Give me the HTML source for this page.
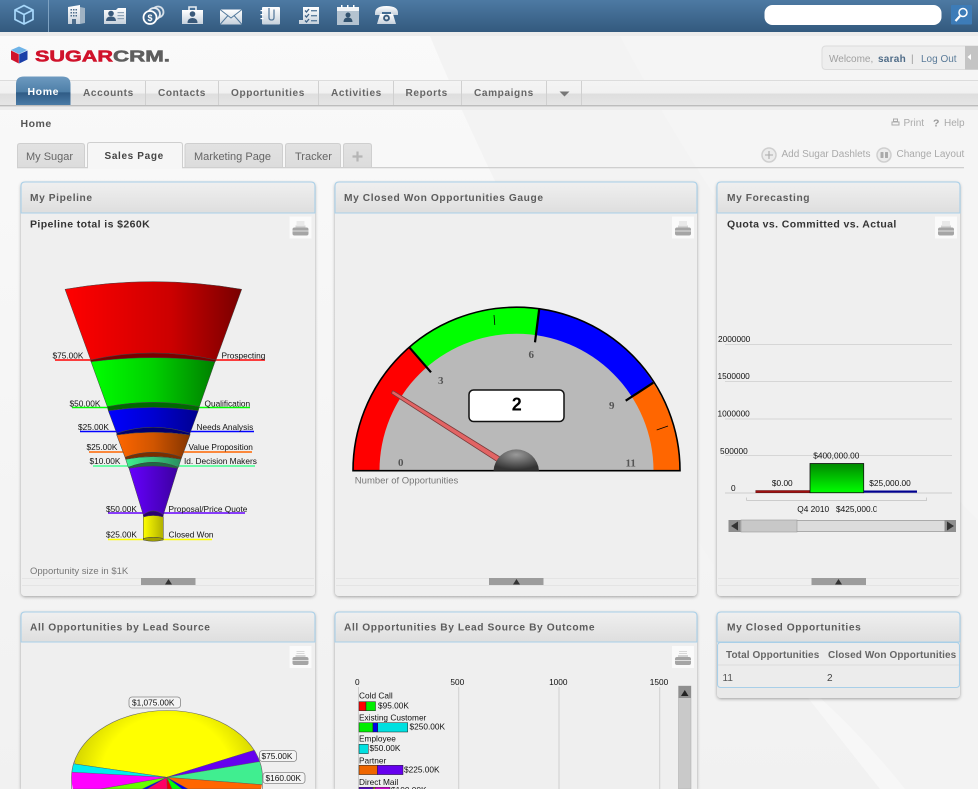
<!DOCTYPE html>
<html><head><meta charset="utf-8"><title>SugarCRM</title>
<style>
html,body{margin:0;padding:0;background:#f3f3f3;width:978px;height:789px;overflow:hidden}
svg{display:block;position:absolute;left:0;top:0}
text{font-family:"Liberation Sans",sans-serif}
.h{font-size:10.2px;font-weight:bold;fill:#5c5c5c;letter-spacing:.6px}
.n{font-size:10.1px;font-weight:bold;fill:#666;letter-spacing:.6px}
.c{font-size:8.3px;fill:#111}
.g{font-size:10px;fill:#aaa}
.t{font-size:11px;fill:#666}
.s{font-size:10.5px;font-weight:bold;fill:#333;letter-spacing:.4px}
.l{font-size:11px;font-weight:bold;fill:#555;font-family:"Liberation Serif",serif}
</style></head><body>
<svg width="978" height="789" viewBox="0 0 978 789" xmlns="http://www.w3.org/2000/svg">
<defs>
<linearGradient id="top" x1="0" y1="0" x2="0" y2="1"><stop offset="0" stop-color="#4d7aa3"/><stop offset="1" stop-color="#335a7e"/></linearGradient>
<linearGradient id="ic" x1="0" y1="0" x2="0" y2="1"><stop offset="0" stop-color="#fff"/><stop offset="1" stop-color="#c6d1dc"/></linearGradient>
<linearGradient id="bg" x1="0" y1="0" x2="0" y2="1"><stop offset="0" stop-color="#fafafa"/><stop offset="1" stop-color="#f1f1f1"/></linearGradient>
<linearGradient id="nav" x1="0" y1="0" x2="0" y2="1"><stop offset="0" stop-color="#f4f4f4"/><stop offset=".52" stop-color="#f1f1f1"/><stop offset=".53" stop-color="#dedede"/><stop offset="1" stop-color="#e6e6e6"/></linearGradient>
<linearGradient id="home" x1="0" y1="0" x2="0" y2="1"><stop offset="0" stop-color="#6d9ac0"/><stop offset=".55" stop-color="#4e7fa8"/><stop offset=".56" stop-color="#2f5b85"/><stop offset="1" stop-color="#4a7ba6"/></linearGradient>
<linearGradient id="hd" x1="0" y1="0" x2="0" y2="1"><stop offset="0" stop-color="#f0f0f0"/><stop offset="1" stop-color="#dedede"/></linearGradient>
<linearGradient id="tab" x1="0" y1="0" x2="0" y2="1"><stop offset="0" stop-color="#e2e2e2"/><stop offset="1" stop-color="#dcdcdc"/></linearGradient>
<linearGradient id="red" x1="0" y1="0" x2="1" y2="0"><stop offset="0" stop-color="#ff0000"/><stop offset=".6" stop-color="#cc0000"/><stop offset="1" stop-color="#780000"/></linearGradient>
<linearGradient id="grn" x1="0" y1="0" x2="1" y2="0"><stop offset="0" stop-color="#00ff00"/><stop offset=".5" stop-color="#00d000"/><stop offset="1" stop-color="#008000"/></linearGradient>
<linearGradient id="blu" x1="0" y1="0" x2="1" y2="0"><stop offset="0" stop-color="#0000ff"/><stop offset=".5" stop-color="#0000d0"/><stop offset="1" stop-color="#000090"/></linearGradient>
<linearGradient id="org" x1="0" y1="0" x2="1" y2="0"><stop offset="0" stop-color="#ff6600"/><stop offset=".5" stop-color="#d05500"/><stop offset="1" stop-color="#853500"/></linearGradient>
<linearGradient id="aq" x1="0" y1="0" x2="1" y2="0"><stop offset="0" stop-color="#40f090"/><stop offset="1" stop-color="#2a9060"/></linearGradient>
<linearGradient id="pur" x1="0" y1="0" x2="1" y2="0"><stop offset="0" stop-color="#6600ff"/><stop offset="1" stop-color="#3c00a0"/></linearGradient>
<linearGradient id="yel" x1="0" y1="0" x2="1" y2="0"><stop offset="0" stop-color="#ffff00"/><stop offset="1" stop-color="#b0b000"/></linearGradient>
<linearGradient id="bar" x1="0" y1="0" x2="0" y2="1"><stop offset="0" stop-color="#008800"/><stop offset="1" stop-color="#00ff00"/></linearGradient>
<radialGradient id="knob" cx=".5" cy=".25" r=".7"><stop offset="0" stop-color="#9a9a9a"/><stop offset="1" stop-color="#333"/></radialGradient>
<radialGradient id="pie" gradientUnits="userSpaceOnUse" cx="167" cy="777" r="96" gradientTransform="translate(0 54) scale(1 .93)"><stop offset=".68" stop-color="#ffff00"/><stop offset="1" stop-color="#d2d200"/></radialGradient>
<filter id="sh" x="-5%" y="-5%" width="110%" height="110%"><feDropShadow dx="0" dy="1" stdDeviation="1.500" flood-color="#000" flood-opacity=".35"/></filter>
<clipPath id="clipPie"><path d="M60 700H280V789H60Z"/></clipPath>
<clipPath id="clipE"><ellipse cx="167" cy="777.500" rx="95.500" ry="67"/></clipPath>
<clipPath id="clipQ"><rect x="790" y="500" width="86.500" height="16"/></clipPath>
<clipPath id="clipB"><rect x="340" y="660" width="350" height="129"/></clipPath>
<symbol id="pr" viewBox="0 0 22 22"><rect width="22" height="22" fill="#fafafa"/><rect x="7" y="5" width="8" height="1" fill="#d8d8d8"/><rect x="7" y="7" width="8" height="1" fill="#d8d8d8"/><rect x="6" y="9" width="10" height="2" fill="#d4d4d4"/><path d="M3 13q0-2 2-2h12q2 0 2 2v4q0 2-2 2H5q-2 0-2-2z" fill="#a5a5a5"/><rect x="3" y="14" width="16" height="1" fill="#dedede"/></symbol>
</defs>

<!-- page background -->
<rect width="978" height="789" fill="url(#bg)"/>
<path d="M430 36H978V789H880L782 665Q560 350 430 36Z" fill="#f3f3f3"/>
<path d="M782 665L880 789H905Q850 720 782 665Z" fill="#f7f7f7"/>
<path d="M620 36H978V520Q760 300 620 36Z" fill="#f5f5f5"/>

<!-- top bar -->
<rect width="978" height="32" fill="url(#top)"/>
<rect y="32" width="978" height="4" fill="#dcdcdc" opacity=".45"/>
<rect x="48" width="1" height="32" fill="#7ea2c2"/>
<g fill="none" stroke="#a8d8fb" stroke-width="1.700" stroke-linejoin="round"><path d="M24 5.500L33 10V19.500L24 24L15 19.500V10Z"/><path d="M15 10L24 14.500L33 10M24 14.500V24"/></g>
<!-- building -->
<g><path d="M68 7L80 5V24H68Z" fill="url(#ic)"/><path d="M80 7L85 8V23L80 24Z" fill="#9fb2c3"/><g fill="#4d6d8c"><rect x="70.500" y="9" width="1.500" height="1.500"/><rect x="73" y="9" width="1.500" height="1.500"/><rect x="75.500" y="9" width="1.500" height="1.500"/><rect x="70.500" y="12" width="1.500" height="1.500"/><rect x="73" y="12" width="1.500" height="1.500"/><rect x="75.500" y="12" width="1.500" height="1.500"/><rect x="70.500" y="15" width="1.500" height="1.500"/><rect x="73" y="15" width="1.500" height="1.500"/><rect x="75.500" y="15" width="1.500" height="1.500"/><rect x="72" y="19" width="4" height="5"/></g></g>
<!-- card -->
<g><path d="M104 10H116L118 8H126V24H104Z" fill="url(#ic)"/><circle cx="111" cy="13.500" r="2.800" fill="#39597a"/><path d="M106 21q0-4.500 5-4.500t5 4.500z" fill="#39597a"/><rect x="117.500" y="12" width="6.500" height="1.200" fill="#8fa4b7"/><rect x="117.500" y="15" width="6.500" height="1.200" fill="#8fa4b7"/><rect x="117.500" y="18" width="6.500" height="1.200" fill="#8fa4b7"/></g>
<!-- coins -->
<g fill="none"><circle cx="158" cy="12" r="5.500" stroke="#d5dfe8" stroke-width="1.800"/><circle cx="154" cy="14" r="6" stroke="#e3e9ef" stroke-width="1.800" fill="#476f96"/><circle cx="150" cy="17.500" r="6.500" stroke="#fff" stroke-width="1.800" fill="#3d6489"/></g><text x="147.500" y="21" font-size="9" font-weight="bold" fill="#fff">$</text>
<!-- briefcase -->
<g><path d="M189 10V7H196V10" fill="none" stroke="#e8edf2" stroke-width="1.600"/><rect x="182" y="10" width="21" height="14" fill="url(#ic)"/><circle cx="192.500" cy="14" r="2.800" fill="#39597a"/><path d="M187.500 23q0-5 5-5t5 5z" fill="#39597a"/></g>
<!-- mail -->
<g><rect x="220" y="9.500" width="22" height="15" fill="url(#ic)"/><path d="M220 9.500L231 18L242 9.500M220 24.500L228 15.500M242 24.500L234 15.500" fill="none" stroke="#52799c" stroke-width="1"/></g>
<!-- notebook -->
<g><rect x="262" y="7" width="18" height="17.500" rx="1" fill="url(#ic)"/><g fill="#fff"><rect x="260.500" y="10" width="3" height="1.200"/><rect x="260.500" y="14" width="3" height="1.200"/><rect x="260.500" y="18" width="3" height="1.200"/></g><path d="M269 8V17.500Q269 20 271.500 20T274 17.500V9.500" fill="none" stroke="#5a7d9e" stroke-width="1.300"/></g>
<!-- checklist -->
<g><path d="M303 7H319V24H299V20H303Z" fill="url(#ic)"/><g fill="none" stroke="#3e6286" stroke-width="1.300"><path d="M305 10.500L306.500 12L309 9M305 15.500L306.500 17L309 14M305 20.500L306.500 22L309 19"/></g><g fill="#5c7f9f"><rect x="311" y="10" width="6" height="1.400"/><rect x="311" y="15" width="6" height="1.400"/><rect x="311" y="20" width="6" height="1.400"/></g></g>
<!-- calendar -->
<g><rect x="337" y="7" width="22" height="18" fill="#b4c3d0"/><rect x="337" y="7" width="22" height="4" fill="#f0f3f6"/><g fill="#fff"><rect x="341" y="5" width="1.500" height="3"/><rect x="347" y="5" width="1.500" height="3"/><rect x="353" y="5" width="1.500" height="3"/></g><circle cx="348" cy="15" r="2.500" fill="#33536f"/><path d="M343.500 22q0-4.500 4.500-4.500t4.500 4.500z" fill="#33536f"/></g>
<!-- phone -->
<g><path d="M375 13Q375 6 386.500 6T398 13V15H391V12H382V15H375Z" fill="url(#ic)"/><path d="M380 14H393L396 24H377Z" fill="url(#ic)"/><circle cx="386.500" cy="18" r="3.400" fill="#36597b"/><circle cx="386.500" cy="18" r="1.500" fill="#dfe6ec"/></g>
<!-- search -->
<rect x="764.500" y="5" width="177" height="20" rx="8" fill="#fff"/>
<rect x="951" y="5" width="21" height="19.500" rx="1" fill="#3d7cb8"/>
<g fill="none" stroke="#fff"><circle cx="963" cy="12.500" r="4" stroke-width="1.500"/><path d="M960 16L955.500 21" stroke-width="2.200"/></g>

<!-- logo -->
<path d="M19 46.500L27 50L19 54L11 50Z" fill="#6fb4e8"/><path d="M11 50.500L18.800 54.300V63.500L11 59.500Z" fill="#d0122b"/><path d="M19.200 54.300L27.500 50.500V59.500L19.200 63.500Z" fill="#1a3fa8"/>
<text x="35" y="61.500" font-size="16" font-weight="bold" fill="#d0122b" stroke="#d0122b" stroke-width=".6" textLength="78" lengthAdjust="spacingAndGlyphs">SUGAR</text>
<text x="113" y="61.500" font-size="16" font-weight="bold" fill="#5e5e5e" stroke="#5e5e5e" stroke-width=".6" textLength="57" lengthAdjust="spacingAndGlyphs">CRM.</text>

<!-- welcome -->
<path d="M826 46H978V69.500H826Q822 69.500 822 65.500V50Q822 46 826 46Z" fill="#eeeeee" stroke="#dcdcdc"/>
<rect x="965" y="46" width="13" height="23.500" fill="#c4c4c4"/><path d="M971 54V60L967.500 57Z" fill="#fff"/>
<text x="829" y="62" font-size="10" fill="#a0a0a0">Welcome,</text><text x="878" y="62" font-size="10" font-weight="bold" fill="#4f6c88" letter-spacing=".25">sarah</text><text x="911" y="62" font-size="10" fill="#9a9a9a">|</text><text x="921" y="62" font-size="10" fill="#5a7b99">Log Out</text>

<!-- nav -->
<rect y="80" width="978" height="26" fill="url(#nav)"/>
<rect y="80" width="978" height="1" fill="#dcdcdc"/><rect y="105" width="978" height="1.500" fill="#bdbdbd"/>
<rect y="107" width="978" height="3" fill="#e8e8e8" opacity=".7"/>
<g fill="#d0d0d0"><rect x="145" y="81" width="1" height="24"/><rect x="218" y="81" width="1" height="24"/><rect x="318" y="81" width="1" height="24"/><rect x="393" y="81" width="1" height="24"/><rect x="461" y="81" width="1" height="24"/><rect x="546" y="81" width="1" height="24"/><rect x="581" y="81" width="1" height="24"/></g>
<path d="M16 105V84Q16 76.500 24 76.500H62Q70.500 76.500 70.500 84V105Z" fill="url(#home)"/>
<text x="27.500" y="95" font-size="10.500" font-weight="bold" fill="#fff" letter-spacing=".6">Home</text>
<text class="n" x="83" y="96">Accounts</text><text class="n" x="158" y="96">Contacts</text><text class="n" x="231" y="96">Opportunities</text><text class="n" x="331" y="96">Activities</text><text class="n" x="405.500" y="96">Reports</text><text class="n" x="474" y="96">Campaigns</text>
<path d="M559.500 91.500H569.500L564.500 96.500Z" fill="#777"/>

<!-- page head -->
<text x="20.500" y="127" font-size="10.500" font-weight="bold" fill="#555" letter-spacing=".5">Home</text>
<path d="M892 122h7v3h-7z M893.500 119h4v2.500h-4z" fill="none" stroke="#aaa"/><text class="g" x="903.500" y="126">Print</text>
<text x="933" y="126.500" font-size="10.500" font-weight="bold" fill="#999">?</text><text class="g" x="944" y="126">Help</text>
<circle cx="769" cy="155" r="7" fill="#ececec" stroke="#cfcfcf" stroke-width="1.500"/><path d="M769 151v8M765 155h8" stroke="#aaa" stroke-width="1.100"/>
<text class="g" x="781.500" y="157">Add Sugar Dashlets</text>
<circle cx="884" cy="155" r="7" fill="#ececec" stroke="#cfcfcf" stroke-width="1.500"/><rect x="880.500" y="152" width="3" height="6" rx=".5" fill="#aaa"/><rect x="885" y="152" width="3" height="6" rx=".5" fill="#aaa"/>
<text class="g" x="896.500" y="157">Change Layout</text>

<!-- tabs -->
<rect x="17" y="167" width="947" height="1.300" fill="#cfcfcf"/>
<g stroke="#cfcfcf" fill="url(#tab)"><path d="M17.500 167.500V146Q17.500 143.500 20 143.500H82Q84.500 143.500 84.500 146V167.500Z"/><path d="M185 167.500V146Q185 143.500 187.500 143.500H280Q282.500 143.500 282.500 146V167.500Z"/><path d="M285.500 167.500V146Q285.500 143.500 288 143.500H338Q340.500 143.500 340.500 146V167.500Z"/><path d="M343.500 167.500V146Q343.500 143.500 346 143.500H369Q371.500 143.500 371.500 146V167.500Z"/></g>
<path d="M87.500 167.500V145Q87.500 142.500 90 142.500H180Q182.500 142.500 182.500 145V167.500" fill="#f6f6f6" stroke="#cfcfcf"/><rect x="88" y="166" width="94" height="3" fill="#f6f6f6"/>
<text class="t" x="26" y="160">My Sugar</text>
<text x="104.500" y="159" font-size="10" font-weight="bold" fill="#444" letter-spacing=".65">Sales Page</text>
<text class="t" x="194" y="160">Marketing Page</text><text class="t" x="295" y="160">Tracker</text>
<path d="M357.500 151.500v10M352.500 156.500h10" stroke="#b5b5b5" stroke-width="2.200"/>

<!-- panels -->
<g filter="url(#sh)" fill="#efefef">
<rect x="21" y="182" width="294" height="414" rx="4"/>
<rect x="335" y="182" width="362" height="414" rx="4"/>
<rect x="717" y="182" width="243" height="414" rx="4"/>
<path d="M21 789V616Q21 612 25 612H311Q315 612 315 616V789Z"/>
<path d="M335 789V616Q335 612 339 612H693Q697 612 697 616V789Z"/>
<rect x="717" y="612" width="243" height="86" rx="4" fill="#e9e9e9"/>
</g>
<g fill="url(#hd)" stroke="#a8cfe8" stroke-width="1.100">
<path d="M21 213V186Q21 182 25 182H311Q315 182 315 186V213Z"/>
<path d="M335 213V186Q335 182 339 182H693Q697 182 697 186V213Z"/>
<path d="M717 213V186Q717 182 721 182H956Q960 182 960 186V213Z"/>
<path d="M21 642V616Q21 612 25 612H311Q315 612 315 616V642Z"/>
<path d="M335 642V616Q335 612 339 612H693Q697 612 697 616V642Z"/>
<path d="M717 642V616Q717 612 721 612H956Q960 612 960 616V642Z"/>
</g>
<text class="h" x="30" y="201">My Pipeline</text>
<text class="h" x="344" y="201">My Closed Won Opportunities Gauge</text>
<text class="h" x="727" y="201">My Forecasting</text>
<text class="h" x="30" y="630.500">All Opportunities by Lead Source</text>
<text class="h" x="344" y="630.500">All Opportunities By Lead Source By Outcome</text>
<text class="h" x="727" y="630.500">My Closed Opportunities</text>
<text class="s" x="30" y="227.500">Pipeline total is $260K</text>
<text class="s" x="727" y="227.500">Quota vs. Committed vs. Actual</text>
<use href="#pr" x="289.500" y="216.500" width="22" height="22"/><use href="#pr" x="672" y="216.500" width="22" height="22"/><use href="#pr" x="935" y="216.500" width="22" height="22"/><use href="#pr" x="289.500" y="646" width="22" height="22"/><use href="#pr" x="672" y="646" width="22" height="22"/>

<!-- panel footers -->
<g fill="#e4e4e4"><rect x="22" y="578" width="292" height="1"/><rect x="22" y="585" width="292" height="1"/><rect x="336" y="578" width="360" height="1"/><rect x="336" y="585" width="360" height="1"/><rect x="718" y="578" width="241" height="1"/><rect x="718" y="585" width="241" height="1"/></g>
<g fill="#9c9c9c"><rect x="141" y="578" width="54.500" height="7"/><rect x="489" y="578" width="54.500" height="7"/><rect x="811.500" y="578" width="54.500" height="7"/></g>
<g fill="#333"><path d="M165 584.500L168.500 579L172 584.500Z"/><path d="M513 584.500L516.500 579L520 584.500Z"/><path d="M835 584.500L838.500 579L842 584.500Z"/></g>

<!-- funnel leader lines -->
<g fill="none" stroke-width="1.400">
<path d="M55 360H265" stroke="#ff0000"/>
<path d="M72 407.500H250" stroke="#00ff00"/>
<path d="M80 431.500H254" stroke="#0000ff"/>
<path d="M89 452H252" stroke="#ff6600"/>
<path d="M93 466H255" stroke="#40ff90"/>
<path d="M108 513H245" stroke="#6600ff"/>
<path d="M108 539.500H212" stroke="#ffff00"/>
</g>
<!-- funnel -->
<g stroke="#444" stroke-width=".5">
<path d="M65 289.300Q153 274 241.700 289.300L216 360Q153 346 90.700 360Z" fill="url(#red)"/>
<path d="M90.700 360Q153 346 216 360L215 362Q153 354 91 362Z" fill="#7a0000"/>
<path d="M91 361.700Q153 353.700 215 361.700L199.300 406.700Q153 398 107.300 406.700Z" fill="url(#grn)"/>
<path d="M107.300 406.700Q153 398 199.300 406.700L198.300 410.700Q153 404 108.300 410.700Z" fill="#006a00"/>
<path d="M108.300 410.700Q153 404 198.300 410.700L190 433.300Q153 421.300 116.700 433.300Z" fill="url(#blu)"/>
<path d="M116.700 433.300Q153 421.300 190 433.300L190 435Q153 429.600 116.700 435Z" fill="#000070"/>
<path d="M116.700 435Q153 429.600 190 435L181.700 457.300Q153 447.300 125 457.300Z" fill="url(#org)"/>
<path d="M125 457.300Q153 447.300 181.700 457.300L181 459.300Q153 454 125.700 459.300Z" fill="#7a2f00"/>
<path d="M125.700 459.300Q153 454 181 459.300L178.300 467.300Q153 457.300 128.300 467.300Z" fill="url(#aq)"/>
<path d="M128.300 467.300Q153 457.300 178.300 467.300L177.700 468.300Q153 463.700 129 468.300Z" fill="#1e6a45"/>
<path d="M129 468.300Q153 463.700 177.700 468.300L163.300 515Q153 507 143.300 515Z" fill="url(#pur)"/>
<path d="M143.300 515Q153 507 163.300 515L163.300 516.500Q153 519 143.300 516.500Z" fill="#2a0070"/>
<path d="M143.300 517Q153 514 163.300 517V538.500Q153 536 143.300 538.500Z" fill="url(#yel)"/>
<path d="M143.300 538.500Q153 536 163.300 538.500V540Q153 542.500 143.300 540Z" fill="#a0a000"/>
</g>
<g>
<text class="c" x="52.500" y="358.500">$75.00K</text><text class="c" x="221.500" y="358.500">Prospecting</text>
<text class="c" x="69.500" y="406.500">$50.00K</text><text class="c" x="204.500" y="406.500">Qualification</text>
<text class="c" x="78" y="430">$25.00K</text><text class="c" x="196.500" y="430">Needs Analysis</text>
<text class="c" x="86.500" y="450">$25.00K</text><text class="c" x="188.500" y="450">Value Proposition</text>
<text class="c" x="89.500" y="464">$10.00K</text><text class="c" x="184" y="464">Id. Decision Makers</text>
<text class="c" x="106" y="512">$50.00K</text><text class="c" x="168.500" y="512">Proposal/Price Quote</text>
<text class="c" x="106" y="537.500">$25.00K</text><text class="c" x="168.500" y="537.500">Closed Won</text>
</g>
<text x="30" y="574" font-size="9.500" fill="#777">Opportunity size in $1K</text>

<!-- gauge -->
<path d="M353 470.700A163.500 163.500 0 0 1 409.300 347.300L516.500 470.700Z" fill="#ff0000"/>
<path d="M409.300 347.300A163.500 163.500 0 0 1 539.300 308.300L516.500 470.700Z" fill="#00ff00"/>
<path d="M539.300 308.300A163.500 163.500 0 0 1 653.300 382.700L516.500 470.700Z" fill="#0000ff"/>
<path d="M653.300 382.700A163.500 163.500 0 0 1 680 470.700H516.500Z" fill="#ff6600"/>
<path d="M379.500 470.700A137 137 0 0 1 653.500 470.700Z" fill="#b9b9b9"/>
<path d="M353 470.700A163.500 163.500 0 0 1 680 470.700Z" fill="none" stroke="#000" stroke-width="1.600"/>
<g stroke="#000" fill="none"><path d="M409.300 347.300L431 372.300M539.300 308.300L535 342.300M653.300 382.700L625.700 400.700" stroke-width="2.200"/><path d="M494 315L494.800 325M656.700 430L668 426" stroke-width=".8"/></g>
<path d="M392.500 390.700L394.500 391.500L500 457L497 461.500L391.500 393.500Z" fill="#e26464" stroke="#7a3a3a" stroke-width=".8"/>
<path d="M493.500 470.700A22.800 22.800 0 0 1 539 470.700Z" fill="url(#knob)"/>
<rect x="469" y="390" width="95" height="31.500" rx="4.500" fill="#fff" stroke="#111" stroke-width="1.500"/>
<text x="516.800" y="410.500" font-size="18" font-weight="bold" fill="#000" text-anchor="middle">2</text>
<text class="l" x="398" y="466">0</text><text class="l" x="438" y="384">3</text><text class="l" x="528.500" y="358">6</text><text class="l" x="609" y="409">9</text><text class="l" x="625.500" y="466.500">11</text>
<text x="354.800" y="483.500" font-size="9.500" fill="#777">Number of Opportunities</text>

<!-- forecasting -->
<g stroke="#d6d6d6" stroke-width="1"><path d="M725 344.500H952M725 381.500H952M725 419H952M725 455.500H952"/></g>
<path d="M725 493H952" stroke="#cccccc"/>
<text class="c" x="718" y="342">2000000</text><text class="c" x="717.500" y="379">1500000</text><text class="c" x="717.500" y="416.500">1000000</text><text class="c" x="720" y="454">500000</text><text class="c" x="731" y="491">0</text>
<rect x="755.700" y="490.500" width="54.300" height="2.200" fill="#a01010" stroke="#400" stroke-width=".4"/>
<rect x="810" y="463.500" width="53.700" height="29.200" fill="url(#bar)" stroke="#111" stroke-width=".8"/>
<rect x="863.700" y="490.500" width="53.300" height="2.200" fill="#000090"/>
<text class="c" x="782.300" y="486" text-anchor="middle">$0.00</text><text class="c" x="836.300" y="458.500" text-anchor="middle">$400,000.00</text><text class="c" x="890" y="486" text-anchor="middle">$25,000.00</text>
<path d="M746.500 500.500V497.500M746.500 500.500H926.500V497.500" fill="none" stroke="#ccc"/>
<g clip-path="url(#clipQ)"><text class="c" x="797.300" y="512">Q4 2010</text><text class="c" x="836" y="512">$425,000.00</text></g>
<rect x="728.500" y="520" width="227.500" height="12" fill="#dcdcdc"/><rect x="728.500" y="520" width="227.500" height="1" fill="#aaa"/><rect x="728.500" y="531" width="227.500" height="1" fill="#aaa"/>
<rect x="741" y="520" width="56" height="12" fill="#c8c8c8" stroke="#999" stroke-width=".6"/>
<rect x="728.500" y="520" width="12" height="12" fill="#8f8f8f"/><rect x="944.500" y="520" width="11.500" height="12" fill="#8f8f8f"/>
<path d="M738 521.500V530.500L731 526Z" fill="#333"/><path d="M947 521.500V530.500L954 526Z" fill="#333"/>

<!-- pie (top of the pie, cut by the frame) -->
<g clip-path="url(#clipPie)"><g clip-path="url(#clipE)" stroke="#555" stroke-width=".4">
<path d="M166.700 777.300L75 764L60 700H270L255 750Z" fill="url(#pie)"/>
<path d="M166.700 777.300L255 750L275 757L259 761.700Z" fill="#6600ee"/>
<path d="M166.700 777.300L259 761.700L275 761V785L262.300 784.700Z" fill="#40ee90"/>
<path d="M166.700 777.300L262.300 784.700L275 789L188 789Z" fill="#ff6600"/>
<path d="M166.700 777.300L188 789H182Z" fill="#0000ee"/>
<path d="M166.700 777.300L182 789H172Z" fill="#00ff00"/>
<path d="M166.700 777.300L172 789H167Z" fill="#ee0000"/>
<path d="M166.700 777.300L167 789H147Z" fill="#ff0066"/>
<path d="M166.700 777.300L147 789H142Z" fill="#0000ee"/>
<path d="M166.700 777.300L142 789H100Z" fill="#66ff00"/>
<path d="M166.700 777.300L100 789H60V771Z" fill="#ff00ff"/>
<path d="M166.700 777.300L75 764L60 760V771.500Z" fill="#00eeee"/>
</g>
<path d="M71.500 789V777.500A95.500 67 0 0 1 262.500 777.500V789" fill="none" stroke="#666" stroke-width=".6"/></g>
<g fill="#f4f4f4" stroke="#888" stroke-width=".8"><rect x="129" y="697" width="51.500" height="11" rx="3"/><rect x="259.500" y="750.500" width="37" height="11" rx="3"/><rect x="263" y="772.500" width="42" height="11" rx="3"/></g>
<text class="c" x="132" y="705.500">$1,075.00K</text><text class="c" x="261.500" y="759">$75.00K</text><text class="c" x="265.500" y="781">$160.00K</text>

<!-- bar chart -->
<path d="M358.500 687V789M458.700 687V789M559 687V789M659.700 687V789" stroke="#cfcfcf"/>
<text class="c" x="357.300" y="685" text-anchor="middle">0</text><text class="c" x="457.300" y="685" text-anchor="middle">500</text><text class="c" x="558.300" y="685" text-anchor="middle">1000</text><text class="c" x="659" y="685" text-anchor="middle">1500</text>
<g stroke="#222" stroke-width=".5">
<rect x="359" y="701.700" width="7" height="9" fill="#ff0000"/><rect x="366" y="701.700" width="9.500" height="9" fill="#00ee00"/>
<rect x="359" y="722.700" width="14" height="9.300" fill="#00ee00"/><rect x="373" y="722.700" width="4.700" height="9.300" fill="#0000ee"/><rect x="377.700" y="722.700" width="30" height="9.300" fill="#00e0e0"/>
<rect x="359" y="744.300" width="9.300" height="9.300" fill="#00e0e0"/>
<rect x="359" y="765.300" width="18.300" height="9.300" fill="#ee6600"/><rect x="377.300" y="765.300" width="25.700" height="9.300" fill="#6600ee"/>
<rect x="359" y="787.300" width="14.300" height="1.700" fill="#6600ee"/><rect x="373.300" y="787.300" width="1.700" height="1.700" fill="#ffff00"/><rect x="375" y="787.300" width="15" height="1.700" fill="#ff00ff"/>
</g>
<text class="c" x="359" y="698.700">Cold Call</text><text class="c" x="378" y="708.500">$95.00K</text>
<text class="c" x="359" y="720.700">Existing Customer</text><text class="c" x="409.500" y="729.700">$250.00K</text>
<text class="c" x="359" y="741.700">Employee</text><text class="c" x="369.500" y="751">$50.00K</text>
<text class="c" x="359" y="763.300">Partner</text><text class="c" x="404" y="772.500">$225.00K</text>
<text class="c" x="359" y="785">Direct Mail</text><g clip-path="url(#clipB)"><text class="c" x="391" y="793">$100.00K</text></g>
<rect x="678.500" y="686" width="12.500" height="103" fill="#c9c9c9" stroke="#aaa" stroke-width=".5"/><rect x="678.500" y="686" width="12.500" height="12" fill="#8f8f8f"/><path d="M681 696L684.800 690L688.500 696Z" fill="#222"/>

<!-- closed table -->
<rect x="717.500" y="642.500" width="242" height="45" rx="3" fill="#ececec" stroke="#a8cfe8" stroke-width="1.100"/>
<path d="M718 665H959" stroke="#dcdcdc"/>
<text x="726" y="658" font-size="10" font-weight="bold" fill="#666" letter-spacing=".1">Total Opportunities</text>
<text x="828" y="658" font-size="10" font-weight="bold" fill="#666" letter-spacing=".1">Closed Won Opportunities</text>
<text x="722.500" y="681" font-size="10" fill="#555">11</text><text x="827" y="681" font-size="10" fill="#444">2</text>
</svg>
</body></html>
